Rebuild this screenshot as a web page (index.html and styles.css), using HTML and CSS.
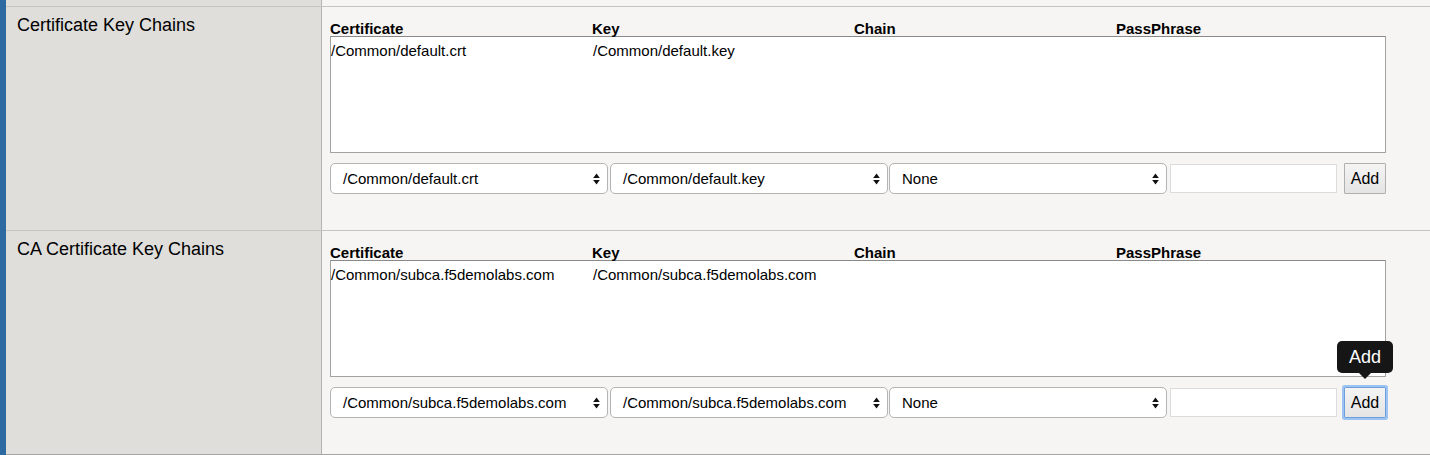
FILE: index.html
```html
<!DOCTYPE html>
<html>
<head>
<meta charset="utf-8">
<link rel="stylesheet" href="styles.css">
</head>
<body>
<div class="page">
  <div class="row row-prev">
    <div class="label-cell"></div>
    <div class="content-cell"></div>
  </div>

  <div class="row">
    <div class="label-cell"><span class="label">Certificate Key Chains</span></div>
    <div class="content-cell">
      <div class="cols head">
        <span>Certificate</span><span>Key</span><span>Chain</span><span>PassPhrase</span>
      </div>
      <div class="listbox">
        <div class="cols item">
          <span>/Common/default.crt</span><span>/Common/default.key</span><span></span><span></span>
        </div>
      </div>
      <div class="controls">
        <div class="select"><span>/Common/default.crt</span><svg class="arrows" width="7" height="12" viewBox="0 0 7 12"><path d="M3.5 0.5 L6.8 5 L0.2 5 Z M0.2 7 L6.8 7 L3.5 11.5 Z" fill="#111"/></svg></div>
        <div class="select"><span>/Common/default.key</span><svg class="arrows" width="7" height="12" viewBox="0 0 7 12"><path d="M3.5 0.5 L6.8 5 L0.2 5 Z M0.2 7 L6.8 7 L3.5 11.5 Z" fill="#111"/></svg></div>
        <div class="select select-narrowgap"><span>None</span><svg class="arrows" width="7" height="12" viewBox="0 0 7 12"><path d="M3.5 0.5 L6.8 5 L0.2 5 Z M0.2 7 L6.8 7 L3.5 11.5 Z" fill="#111"/></svg></div>
        <div class="textbox"></div>
        <div class="btn-wrap"><button class="btn">Add</button></div>
      </div>
    </div>
  </div>

  <div class="row row-last">
    <div class="label-cell"><span class="label">CA Certificate Key Chains</span></div>
    <div class="content-cell">
      <div class="cols head">
        <span>Certificate</span><span>Key</span><span>Chain</span><span>PassPhrase</span>
      </div>
      <div class="listbox">
        <div class="cols item">
          <span>/Common/subca.f5demolabs.com</span><span>/Common/subca.f5demolabs.com</span><span></span><span></span>
        </div>
      </div>
      <div class="controls">
        <div class="select"><span>/Common/subca.f5demolabs.com</span><svg class="arrows" width="7" height="12" viewBox="0 0 7 12"><path d="M3.5 0.5 L6.8 5 L0.2 5 Z M0.2 7 L6.8 7 L3.5 11.5 Z" fill="#111"/></svg></div>
        <div class="select"><span>/Common/subca.f5demolabs.com</span><svg class="arrows" width="7" height="12" viewBox="0 0 7 12"><path d="M3.5 0.5 L6.8 5 L0.2 5 Z M0.2 7 L6.8 7 L3.5 11.5 Z" fill="#111"/></svg></div>
        <div class="select select-narrowgap"><span>None</span><svg class="arrows" width="7" height="12" viewBox="0 0 7 12"><path d="M3.5 0.5 L6.8 5 L0.2 5 Z M0.2 7 L6.8 7 L3.5 11.5 Z" fill="#111"/></svg></div>
        <div class="textbox"></div>
        <div class="btn-wrap">
          <div class="tooltip">Add</div>
          <button class="btn btn-focus">Add</button>
        </div>
      </div>
    </div>
  </div>
</div>
</body>
</html>
```

FILE: styles.css
```css
* { box-sizing: border-box; }

html, body {
  margin: 0;
  padding: 0;
  background: #f6f5f3;
  font-family: "Liberation Sans", Arial, Helvetica, sans-serif;
  color: #000;
}

.page {
  border-left: 6px solid #2e6aa2;
  height: 455px;
  overflow: hidden;
}

.row {
  display: grid;
  grid-template-columns: 316px 1fr;
  border-top: 1px solid #c4c4c2;
}

.row-prev {
  border-top: none;
  height: 6px;
}

.row-last {
  border-bottom: 2px solid #a6a6a4;
}

.label-cell {
  background: #dfdedb;
  border-right: 1px solid #b3b3b1;
  padding: 8px 0 0 11px;
}

.label {
  font-size: 18px;
  line-height: 21px;
}

.content-cell {
  background: #f6f5f3;
  padding: 13px 0 36px 8px;
}

.row-prev .content-cell,
.row-prev .label-cell {
  padding: 0;
}

.cols {
  display: grid;
  grid-template-columns: 262px 262px 262px 262px;
}

.head {
  font-size: 15px;
  font-weight: bold;
  line-height: 18px;
  height: 16px;
  overflow: visible;
}

.listbox {
  width: 1056px;
  height: 117px;
  background: #fff;
  border: 1px solid #a2a2a2;
  border-top-color: #8a8a8a;
  padding: 5px 0 0 0;
}

.item {
  font-size: 15px;
  line-height: 17px;
}

.controls {
  display: flex;
  align-items: center;
  margin-top: 10px;
  height: 31px;
}

.select {
  width: 278px;
  height: 31px;
  background: #fff;
  border: 1px solid #b4b4b4;
  border-radius: 5px;
  display: flex;
  align-items: center;
  justify-content: space-between;
  padding: 0 7px 0 12px;
  font-size: 15px;
  margin-right: 2px;
}

.select:nth-child(2) { margin-right: 1px; }

.select-narrowgap { margin-right: 3px; }

.arrows { display: block; }

.textbox {
  width: 167px;
  height: 29px;
  background: #fff;
  border: 1px solid #dcdcdc;
  margin-right: 7px;
}

.btn-wrap {
  position: relative;
  width: 42px;
  height: 31px;
}

.btn {
  width: 42px;
  height: 31px;
  margin: 0;
  padding: 0;
  font-family: "Liberation Sans", Arial, sans-serif;
  font-size: 16px;
  color: #000;
  background: linear-gradient(#f4f4f4, #e4e4e4);
  border: 1px solid #b0b0b0;
  border-radius: 1px;
}

.btn-focus {
  border-color: #6e9fdc;
  box-shadow: 0 0 0 2px #9cc4f2;
}

.tooltip {
  position: absolute;
  left: -7px;
  bottom: 45px;
  width: 56px;
  height: 32px;
  background: #161616;
  color: #fff;
  border-radius: 5px;
  font-size: 18px;
  line-height: 32px;
  text-align: center;
}

.tooltip::after {
  content: "";
  position: absolute;
  left: 50%;
  bottom: -6px;
  margin-left: -6px;
  border-left: 6px solid transparent;
  border-right: 6px solid transparent;
  border-top: 6px solid #161616;
}
```
